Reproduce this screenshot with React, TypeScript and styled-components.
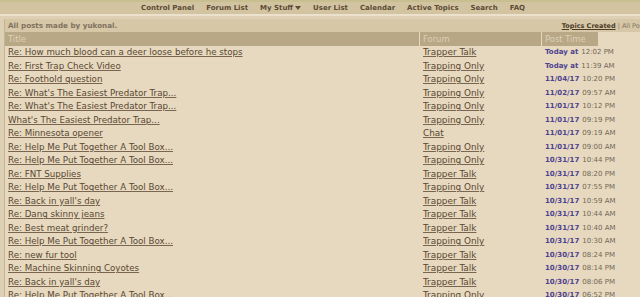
import styled, { createGlobalStyle } from 'styled-components'

type Post = { title: string; forum: string; day: string; time: string }

const posts: Post[] = [
  { title: 'Re: How much blood can a deer loose before he stops', forum: 'Trapper Talk', day: 'Today at', time: '12:02 PM' },
  { title: 'Re: First Trap Check Video', forum: 'Trapping Only', day: 'Today at', time: '11:39 AM' },
  { title: 'Re: Foothold question', forum: 'Trapping Only', day: '11/04/17', time: '10:20 PM' },
  { title: "Re: What's The Easiest Predator Trap...", forum: 'Trapping Only', day: '11/02/17', time: '09:57 AM' },
  { title: "Re: What's The Easiest Predator Trap...", forum: 'Trapping Only', day: '11/01/17', time: '10:12 PM' },
  { title: "What's The Easiest Predator Trap...", forum: 'Trapping Only', day: '11/01/17', time: '09:19 PM' },
  { title: 'Re: Minnesota opener', forum: 'Chat', day: '11/01/17', time: '09:19 AM' },
  { title: 'Re: Help Me Put Together A Tool Box...', forum: 'Trapping Only', day: '11/01/17', time: '09:00 AM' },
  { title: 'Re: Help Me Put Together A Tool Box...', forum: 'Trapping Only', day: '10/31/17', time: '10:44 PM' },
  { title: 'Re: FNT Supplies', forum: 'Trapper Talk', day: '10/31/17', time: '08:20 PM' },
  { title: 'Re: Help Me Put Together A Tool Box...', forum: 'Trapping Only', day: '10/31/17', time: '07:55 PM' },
  { title: "Re: Back in yall's day", forum: 'Trapper Talk', day: '10/31/17', time: '10:59 AM' },
  { title: 'Re: Dang skinny jeans', forum: 'Trapper Talk', day: '10/31/17', time: '10:44 AM' },
  { title: 'Re: Best meat grinder?', forum: 'Trapper Talk', day: '10/31/17', time: '10:40 AM' },
  { title: 'Re: Help Me Put Together A Tool Box...', forum: 'Trapping Only', day: '10/31/17', time: '10:30 AM' },
  { title: 'Re: new fur tool', forum: 'Trapper Talk', day: '10/30/17', time: '08:24 PM' },
  { title: 'Re: Machine Skinning Coyotes', forum: 'Trapper Talk', day: '10/30/17', time: '08:14 PM' },
  { title: "Re: Back in yall's day", forum: 'Trapper Talk', day: '10/30/17', time: '08:06 PM' },
  { title: 'Re: Help Me Put Together A Tool Box...', forum: 'Trapping Only', day: '10/30/17', time: '06:52 PM' },
]

const navItems = ['Control Panel', 'Forum List', 'My Stuff', 'User List', 'Calendar', 'Active Topics', 'Search', 'FAQ']

const GlobalStyle = createGlobalStyle`
  html, body {
    margin: 0;
    padding: 0;
    background: #e6d9bf;
    overflow: hidden;
  }
  body {
    font-family: "DejaVu Sans", Verdana, sans-serif;
  }
`

const Page = styled.div`
  width: 640px;
  height: 297px;
  overflow: hidden;
  background: #ddd0b4;
  display: flex;
  flex-direction: column;
`

const TopStrip = styled.div`
  height: 2px;
  flex-shrink: 0;
  background: #c8bf90;
`

const NavBar = styled.div`
  height: 12px;
  flex-shrink: 0;
  background: #d3c4a1;
  border-bottom: 2px solid #ebe1cd;
  display: flex;
  align-items: center;
  padding-left: 141px;
  gap: 12px;
`

const NavLink = styled.span`
  font-size: 7px;
  font-weight: bold;
  color: #5d4b36;
  white-space: nowrap;
  display: flex;
  align-items: center;
  gap: 2px;
`

const Caret = styled.span`
  width: 0;
  height: 0;
  border-left: 3px solid transparent;
  border-right: 3px solid transparent;
  border-top: 4px solid #5d4b36;
`

const Body = styled.div`
  flex: 1 0 auto;
  margin-top: 3px;
  margin-left: 4px;
  border-left: 1px solid #c4b594;
  background: #e6d9bf;
  display: flex;
  flex-direction: column;
`

const InfoRow = styled.div`
  height: 13px;
  flex-shrink: 0;
  background: #d6c7a7;
  display: flex;
  align-items: center;
  justify-content: space-between;
  padding-left: 3px;
  font-size: 7.2px;
  font-weight: bold;
  color: #817260;
  overflow: hidden;
`

const InfoLinks = styled.span`
  white-space: nowrap;
  margin-right: -9px;
  font-size: 6.5px;
  color: #817260;
  font-weight: normal;
`

const StrongLink = styled.span`
  color: #4c3b27;
  font-weight: bold;
  text-decoration: underline;
`

const Grid = styled.div`
  display: grid;
  grid-template-columns: 415px 122px 1fr;
  grid-auto-rows: 13.5px;
`

const HeadCell = styled.div<{ $shade: string; $trim?: number }>`
  background: ${(p) => p.$shade};
  color: #ddd0b8;
  font-size: 8.4px;
  display: flex;
  align-items: center;
  padding-left: 3px;
  margin-right: ${(p) => p.$trim ?? 1}px;
`

const Cell = styled.div`
  display: flex;
  align-items: center;
  padding-left: 3px;
  white-space: nowrap;
  overflow: hidden;
`

const TitleLink = styled.span`
  font-size: 8.7px;
  color: #5a4732;
  text-decoration: underline;
  text-decoration-color: #7a6650;
`

const ForumLink = styled(TitleLink)`
  font-size: 8.9px;
`

const Day = styled.span`
  font-size: 7px;
  font-weight: bold;
  color: #4e4290;
`

const Time = styled.span`
  font-size: 7px;
  color: #726656;
  margin-left: 3px;
`

export default function App() {
  return (
    <Page>
      <GlobalStyle />
      <TopStrip />
      <NavBar>
        {navItems.map((item) => (
          <NavLink key={item}>
            {item}
            {item === 'My Stuff' && <Caret />}
          </NavLink>
        ))}
      </NavBar>
      <Body>
        <InfoRow>
          <span>All posts made by yukonal.</span>
          <InfoLinks>
            <StrongLink>Topics Created</StrongLink> | All Posts
          </InfoLinks>
        </InfoRow>
        <Grid>
          <HeadCell $shade="#b9a886">Title</HeadCell>
          <HeadCell $shade="#b8a784">Forum</HeadCell>
          <HeadCell $shade="#b9a886" $trim={42}>Post Time</HeadCell>
          {posts.map((p, i) => (
            <Row key={i} post={p} />
          ))}
        </Grid>
      </Body>
    </Page>
  )
}

function Row({ post }: { post: Post }) {
  return (
    <>
      <Cell>
        <TitleLink>{post.title}</TitleLink>
      </Cell>
      <Cell>
        <ForumLink>{post.forum}</ForumLink>
      </Cell>
      <Cell>
        <Day>{post.day}</Day>
        <Time>{post.time}</Time>
      </Cell>
    </>
  )
}
